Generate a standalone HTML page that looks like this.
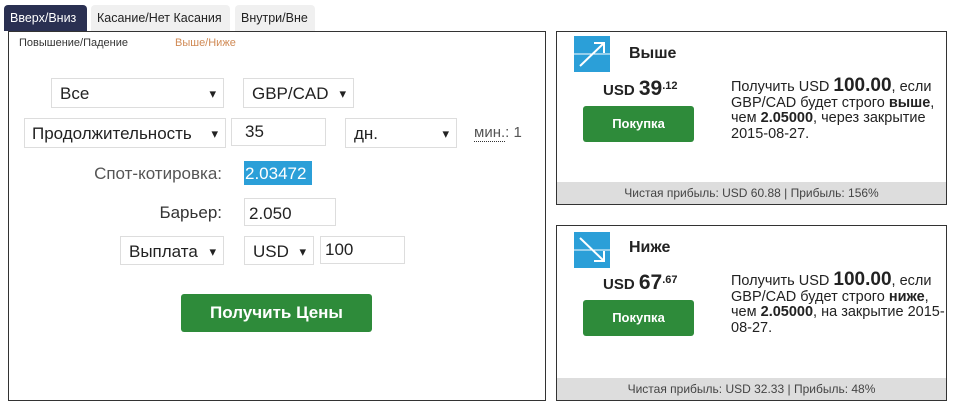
<!DOCTYPE html>
<html><head><meta charset="utf-8"><style>
*{box-sizing:border-box;margin:0;padding:0}
body{width:955px;height:408px;background:#fff;font-family:"Liberation Sans",sans-serif;color:#222;position:relative;overflow:hidden}
.a{position:absolute}
.tab{position:absolute;top:5px;height:26px;font-size:12.5px;line-height:26px;padding:0 6px;background:#f0f0f0;border-radius:4px 4px 0 0;color:#222}
.box{position:absolute;border:1px solid #ddd;background:#fff;font-size:17px;line-height:29px;padding-left:8px;color:#222}
.sel::after{content:"\25BE";position:absolute;right:7px;top:0;font-size:13px}
.btn{position:absolute;background:#2e8b3a;color:#fff;font-weight:bold;text-align:center;border-radius:3px}
.card{position:absolute;left:556px;width:391px;border:1px solid #333;background:#fff}
.foot{position:absolute;left:0;right:0;bottom:0;height:22px;background:#ddd;font-size:12px;line-height:22px;text-align:center;color:#444}
.desc{position:absolute;left:174px;top:46px;font-size:14.5px;line-height:15.5px;width:214px;color:#222}
.desc b.big{font-size:19px}
</style></head><body>
<div class="tab" style="left:4px;width:83px;background:#2a3052;color:#fff">Вверх/Вниз</div>
<div class="tab" style="left:91px;width:139px">Касание/Нет Касания</div>
<div class="tab" style="left:235px;width:80px">Внутри/Вне</div>
<div class="a" style="left:8px;top:31px;width:538px;height:370px;border:1px solid #333"></div>
<div class="a" style="left:19px;top:37px;font-size:11px;color:#333">Повышение/Падение</div>
<div class="a" style="left:175px;top:37px;font-size:11px;color:#d08a55">Выше/Ниже</div>

<div class="box sel" style="left:51px;top:78px;width:173px;height:30px">Все</div>
<div class="box sel" style="left:243px;top:78px;width:111px;height:30px">GBP/CAD</div>
<div class="box sel" style="left:24px;top:118px;width:202px;height:30px;padding-left:7px">Продолжительность</div>
<div class="box" style="left:231px;top:118px;width:95px;height:28px;line-height:26px;padding-left:13px">35</div>
<div class="box sel" style="left:345px;top:118px;width:112px;height:30px">дн.</div>
<div class="a" style="left:474px;top:124px;font-size:15px;color:#555"><span style="border-bottom:1px dotted #333">мин.</span>: 1</div>

<div class="a" style="left:50px;top:164px;width:172px;text-align:right;font-size:17px;color:#555">Спот-котировка:</div>
<div class="a" style="left:244px;top:161px;width:68px;height:24px;background:#2b9fd8;color:#fff;font-size:17px;line-height:25px;padding-left:1px">2.03472</div>
<div class="a" style="left:50px;top:203px;width:172px;text-align:right;font-size:17px;color:#333">Барьер:</div>
<div class="box" style="left:244px;top:198px;width:92px;height:28px;line-height:30px;padding-left:4px">2.050</div>
<div class="box sel" style="left:120px;top:236px;width:104px;height:29px;line-height:29px">Выплата</div>
<div class="box sel" style="left:244px;top:236px;width:70px;height:29px;line-height:29px">USD</div>
<div class="box" style="left:320px;top:236px;width:85px;height:28px;line-height:26px;padding-left:4px">100</div>
<div class="btn" style="left:181px;top:294px;width:191px;height:38px;line-height:38px;font-size:17px">Получить Цены</div>

<div class="card" style="top:31px;height:174px">
 <svg class="a" style="left:17px;top:4px" width="36" height="36"><rect width="36" height="36" fill="#2b9fd8"/><line x1="0" y1="18" x2="36" y2="18" stroke="#fff" stroke-width="1"/><path d="M6 30 L30 7 M20 7 H30 V17" stroke="#fff" stroke-width="2" fill="none"/></svg>
 <div class="a" style="left:72px;top:13px;font-size:16px;font-weight:bold">Выше</div>
 <div class="a" style="left:46px;top:45px;font-weight:bold;font-size:15px">USD <span style="font-size:21px">39</span><sup style="font-size:11px">.12</sup></div>
 <div class="btn" style="left:26px;top:74px;width:111px;height:36px;line-height:36px;font-size:13px">Покупка</div>
 <div class="desc">Получить USD <b class="big">100.00</b>, если GBP/CAD будет строго <b>выше</b>, чем <b>2.05000</b>, через закрытие 2015-08-27.</div>
 <div class="foot">Чистая прибыль: USD 60.88 | Прибыль: 156%</div>
</div>

<div class="card" style="top:225px;height:176px">
 <svg class="a" style="left:17px;top:6px" width="36" height="36"><rect width="36" height="36" fill="#2b9fd8"/><line x1="0" y1="18" x2="36" y2="18" stroke="#fff" stroke-width="1"/><path d="M6 6 L30 29 M20 29 H30 V19" stroke="#fff" stroke-width="2" fill="none"/></svg>
 <div class="a" style="left:72px;top:13px;font-size:16px;font-weight:bold">Ниже</div>
 <div class="a" style="left:46px;top:45px;font-weight:bold;font-size:15px">USD <span style="font-size:21px">67</span><sup style="font-size:11px">.67</sup></div>
 <div class="btn" style="left:26px;top:74px;width:111px;height:36px;line-height:36px;font-size:13px">Покупка</div>
 <div class="desc">Получить USD <b class="big">100.00</b>, если GBP/CAD будет строго <b>ниже</b>, чем <b>2.05000</b>, на закрытие 2015-08-27.</div>
 <div class="foot">Чистая прибыль: USD 32.33 | Прибыль: 48%</div>
</div>
</body></html>
